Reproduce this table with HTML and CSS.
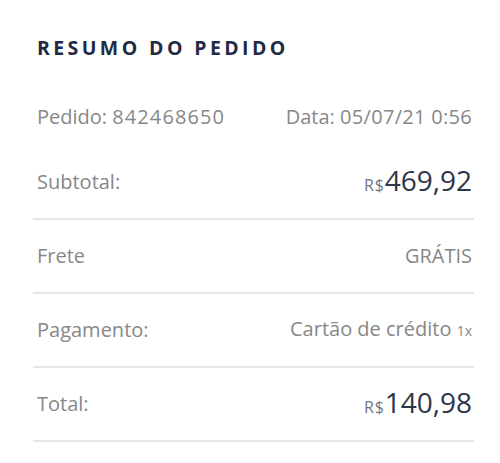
FILE: index.html
```html
<!DOCTYPE html>
<html lang="pt">
<head>
<meta charset="utf-8">
<link rel="stylesheet" href="styles.css">
</head>
<body>
<section class="summary">
  <h2 class="title">RESUMO DO PEDIDO</h2>
  <div class="meta">
    <span>Pedido: <span class="num">842468650</span></span>
    <span>Data: <span class="num-sm">05/07/21 0:56</span></span>
  </div>
  <div class="row">
    <span class="label">Subtotal:</span>
    <span class="price"><small>R$</small>469,92</span>
  </div>
  <div class="row">
    <span class="label">Frete</span>
    <span class="value">GRÁTIS</span>
  </div>
  <div class="row">
    <span class="label">Pagamento:</span>
    <span class="value">Cartão de crédito <small class="inst">1x</small></span>
  </div>
  <div class="row">
    <span class="label">Total:</span>
    <span class="price"><small>R$</small>140,98</span>
  </div>
</section>
</body>
</html>
```
FILE: styles.css
```css
html, body {
  margin: 0;
  padding: 0;
  background: #ffffff;
}
body {
  font-family: "Open Sans", "Noto Sans", sans-serif;
  color: #878787;
}
.summary {
  padding: 37px 26px 0 33px;
}
.title {
  margin: 0 0 0 4px;
  font-size: 19.5px;
  font-weight: 700;
  letter-spacing: 3.4px;
  color: #1f2a44;
  line-height: 22px;
}
.meta {
  display: flex;
  justify-content: space-between;
  align-items: center;
  height: 58px;
  margin-top: 29px;
  padding: 0 2px 0 4px;
  font-size: 20px;
  line-height: 24px;
}
.num {
  letter-spacing: 1.1px;
}
.num-sm {
  letter-spacing: 0.3px;
}
.row {
  display: flex;
  justify-content: space-between;
  align-items: center;
  height: 74px;
  padding: 0 2px 0 4px;
  border-bottom: 2px solid #e6e6e6;
  box-sizing: border-box;
  font-size: 20px;
  line-height: 24px;
}
.row:first-of-type {
  margin-top: 1px;
}
.label,
.value {
  color: #878787;
}
.price {
  color: #2d3548;
  font-size: 28px;
  line-height: 30px;
}
.price small {
  font-size: 16px;
  letter-spacing: 0.8px;
  color: #6e7585;
}
.inst {
  font-size: 14px;
}
```
